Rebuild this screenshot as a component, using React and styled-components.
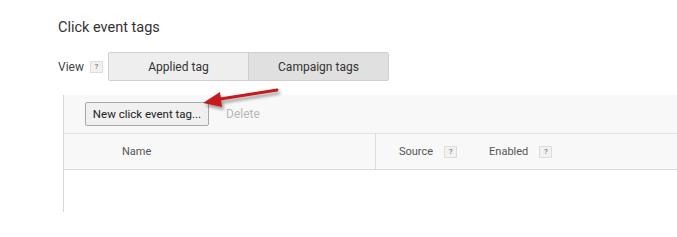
import React from 'react';
import styled, { createGlobalStyle } from 'styled-components';

const GlobalStyle = createGlobalStyle`
  body {
    margin: 0;
    background: #fff;
    font-family: Roboto, 'Liberation Sans', sans-serif;
    color: #333;
  }
`;

const Page = styled.div`
  position: relative;
  width: 677px;
  height: 237px;
  padding: 18px 0 0 58px;
  box-sizing: border-box;
  overflow: hidden;
`;

const Title = styled.h1`
  margin: 0;
  font-size: 14.5px;
  font-weight: 400;
  color: #333;
  line-height: 20px;
`;

const ViewRow = styled.div`
  display: flex;
  align-items: center;
  margin-top: 14px;
  height: 29px;
`;

const ViewLabel = styled.span`
  font-size: 12px;
  color: #444;
`;

const Help = styled.span`
  display: inline-flex;
  align-items: center;
  justify-content: center;
  width: 11px;
  height: 10px;
  border: 1px solid #ddd;
  background: #f1f1f1;
  font-size: 8px;
  color: #666;
  margin-left: ${(p) => p.$gap || 0}px;
`;

const Segments = styled.div`
  display: flex;
  margin-left: 5px;
  border: 1px solid #cfcfcf;
  border-radius: 2px;
`;

const Segment = styled.div`
  width: 139px;
  height: 27px;
  display: flex;
  align-items: center;
  justify-content: center;
  font-size: 12px;
  color: #333;
  background: ${(p) => (p.$active ? '#e0e0e0' : '#eeeeee')};
  & + & {
    border-left: 1px solid #cfcfcf;
  }
`;

const Panel = styled.div`
  margin-top: 14px;
  margin-left: 5px;
  border-left: 1px solid #d6d6d6;
  height: 117px;
`;

const Toolbar = styled.div`
  display: flex;
  align-items: center;
  height: 39px;
  padding-left: 21px;
  background: #f8f8f8;
  border-bottom: 1px solid #e2e2e2;
  box-sizing: border-box;
`;

const Button = styled.div`
  height: 24px;
  width: 124px;
  box-sizing: border-box;
  display: flex;
  align-items: center;
  justify-content: center;
  border: 1px solid #a9a9a9;
  border-radius: 2px;
  background: #f0f0f0;
  font-size: 11.5px;
  color: #222;
`;

const LinkAction = styled.span`
  margin-left: 17px;
  font-size: 12px;
  color: #b8b8b8;
`;

const HeaderRow = styled.div`
  display: flex;
  height: 36px;
  background: #f8f8f8;
  border-bottom: 1px solid #dcdcdc;
  box-sizing: border-box;
  font-size: 11px;
  color: #555;
`;

const HeaderCell = styled.div`
  display: flex;
  align-items: center;
  width: ${(p) => p.$width || 'auto'};
  padding-left: ${(p) => p.$pad || 0}px;
  box-sizing: border-box;
  border-right: ${(p) => (p.$divider ? '1px solid #dcdcdc' : 'none')};
`;

const Arrow = styled.svg`
  position: absolute;
  left: 196px;
  top: 82px;
  overflow: visible;
`;

export default function App() {
  return (
    <Page>
      <GlobalStyle />
      <Title>Click event tags</Title>
      <ViewRow>
        <ViewLabel>View</ViewLabel>
        <Help $gap={6}>?</Help>
        <Segments>
          <Segment>Applied tag</Segment>
          <Segment $active>Campaign tags</Segment>
        </Segments>
      </ViewRow>
      <Panel>
        <Toolbar>
          <Button>New click event tag...</Button>
          <LinkAction>Delete</LinkAction>
        </Toolbar>
        <HeaderRow>
          <HeaderCell $width="312px" $pad={58} $divider>Name</HeaderCell>
          <HeaderCell $pad={23}>
            Source<Help $gap={11}>?</Help>
          </HeaderCell>
          <HeaderCell $pad={32}>
            Enabled<Help $gap={11}>?</Help>
          </HeaderCell>
        </HeaderRow>
      </Panel>
      <Arrow width="90" height="30">
        <defs>
          <filter id="sh" x="-20%" y="-50%" width="140%" height="200%">
            <feDropShadow dx="2" dy="3" stdDeviation="1.5" floodColor="#000" floodOpacity="0.35" />
          </filter>
        </defs>
        <g filter="url(#sh)">
          <line x1="81" y1="8" x2="18" y2="18" stroke="#c41a1a" strokeWidth="3" strokeLinecap="round" />
          <polygon points="7,21 24,10 26,25" fill="#c41a1a" />
        </g>
      </Arrow>
    </Page>
  );
}
